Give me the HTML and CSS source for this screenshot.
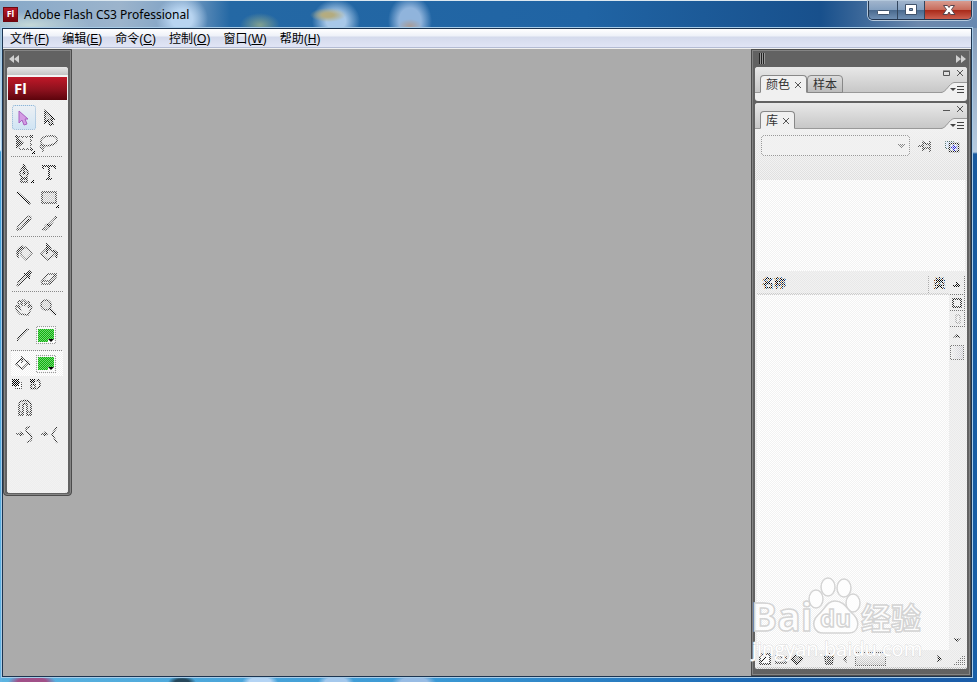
FILE: index.html
```html
<!DOCTYPE html>
<html lang="zh-CN">
<head>
<meta charset="utf-8">
<title>Adobe Flash CS3 Professional</title>
<link rel="stylesheet" href="styles.css">
</head>
<body>
<div class="window">
  <header class="titlebar">
    <span class="app-icon">Fl</span>
    <h1 class="title">Adobe Flash CS3 Professional</h1>
    <div class="window-buttons">
      <button class="wb wb-min" aria-label="最小化"><svg width="28" height="18" viewBox="0 0 28 18"><rect x="8.500" y="9.500" width="12" height="4" rx="1" fill="#fff" stroke="#40536b"/></svg></button>
      <button class="wb wb-max" aria-label="最大化"><svg width="26" height="18" viewBox="0 0 26 18"><path d="M7.500 3.500h11v10h-11zM11.500 7.500h3v2h-3z" fill="#fff" fill-rule="evenodd" stroke="#40536b"/></svg></button>
      <button class="wb wb-close" aria-label="关闭"><svg width="46" height="18" viewBox="0 0 46 18"><path d="M18.500 4.500h4l1.500 2 1.500-2h4L26.500 8.500l3.500 5h-4.500L24 11l-1.500 2.500H18l3.500-5z" fill="#fff" stroke="#56444d"/></svg></button>
    </div>
  </header>

  <div class="client">
    <nav class="menubar">
      <button>文件(<u>F</u>)</button>
      <button>编辑(<u>E</u>)</button>
      <button>命令(<u>C</u>)</button>
      <button>控制(<u>O</u>)</button>
      <button>窗口(<u>W</u>)</button>
      <button>帮助(<u>H</u>)</button>
    </nav>

    <main class="workspace">
      <aside class="toolbox">
        <button class="collapse" aria-label="折叠"><svg width="10" height="8" viewBox="0 0 10 8"><path d="M5 0v8L0 4zM10 0v8L5 4z" fill="#d0d0d0"/></svg></button>
        <div class="tool-panel">
          <div class="grip"></div>
          <div class="brand">Fl</div>
          <div class="tools dither">
            <div class="group">
              <button class="tool selected" aria-label="选择"><svg viewBox="0 0 24 24"><path d="M7 5v12l3-3 2 5 3-1-2-5h3z" fill="#d49ce4" stroke="#a860c0"/></svg></button>
              <button class="tool" aria-label="部分选取"><svg viewBox="0 0 24 24"><path d="M8 5v12l3-3 2 5 3-1-2-5h3z" fill="#bbb" stroke="#000" stroke-width="1.500"/></svg></button>
              <button class="tool" aria-label="任意变形"><svg viewBox="0 0 24 24"><path d="M5 6h14v12H7" fill="none" stroke="#333" stroke-dasharray="3 1" stroke-width="1.500"/><path d="M4 5v13l8-6z" fill="#333"/><path d="M3 4h3v3H3zM18 4h3v3h-3zM18 17h3v3h-3z" fill="#333"/><path d="M23 19v4h-4z"/></svg></button>
              <button class="tool" aria-label="套索"><svg viewBox="0 0 24 24"><path d="M6 14c-5-3-1-9 6-9 8-1 11 5 5 8-4 2-9 2-12 1-3 1-1 4 1 3s1-3-1-3m1 3v4" fill="none" stroke="#444" stroke-width="1.500"/></svg></button>
            </div>
            <hr>
            <div class="group">
              <button class="tool" aria-label="钢笔"><svg viewBox="0 0 24 24"><path d="M12 3c0 4-5 7-4 10l2 4h4l2-4c1-3-4-6-4-10zm0 2v7m-3 6h6v3H9z" fill="#ddd" stroke="#222" stroke-width="1.500"/><circle cx="12" cy="12" r="1.500"/><path d="M22 18v4h-4z"/></svg></button>
              <button class="tool" aria-label="文本"><svg viewBox="0 0 24 24"><path d="M6 8V5h12v3M12 5v13m-3 0h6" fill="none" stroke="#222" stroke-width="2"/></svg></button>
              <button class="tool" aria-label="线条"><svg viewBox="0 0 24 24"><path d="M5 6l13 12" stroke="#000" stroke-width="2"/></svg></button>
              <button class="tool" aria-label="矩形"><svg viewBox="0 0 24 24"><path d="M5 6h14v11H5z" fill="#ccc" stroke="#333" stroke-width="1.500"/><path d="M22 18v4h-4z"/></svg></button>
              <button class="tool" aria-label="铅笔"><svg viewBox="0 0 24 24"><path d="M5 19l1-4L15 6c3-2 5 0 3 3l-9 9z" fill="#ddd" stroke="#555" stroke-width="1.500"/><path d="M5 19L17 8" stroke="#000"/></svg></button>
              <button class="tool" aria-label="刷子"><svg viewBox="0 0 24 24"><path d="M5 18c3 0 2-4 5-5L18 5l2 1-7 9c-1 4-5 5-8 3z" fill="#999" stroke="#333"/><path d="M10 13l3 2" stroke="#000" stroke-width="2"/></svg></button>
            </div>
            <hr>
            <div class="group">
              <button class="tool" aria-label="墨水瓶"><svg viewBox="0 0 24 24"><path d="M9 9l5-3 6 6-6 7-5-5z" fill="#ddd" stroke="#666" stroke-width="1.500"/><path d="M11 5c-5 1-8 5-5 12 0-6 2-9 6-10" fill="#333" stroke="#333"/></svg></button>
              <button class="tool" aria-label="颜料桶"><svg viewBox="0 0 24 24"><path d="M10 7l9 5-8 7-7-6z" fill="#ddd" stroke="#444" stroke-width="1.500"/><path d="M10 13V4l4 4M16 9l4 3-1 5" fill="none" stroke="#222" stroke-width="2"/></svg></button>
              <button class="tool" aria-label="滴管"><svg viewBox="0 0 24 24"><path d="M5 20l1-4 7-7 2 2-8 8z" fill="#bbb" stroke="#333"/><path d="M11 7l3 0 3-3 3 2-2 4v4z" fill="#222"/></svg></button>
              <button class="tool" aria-label="橡皮擦"><svg viewBox="0 0 24 24"><path d="M5 15l6-7h8l-6 7zM5 15v3h8v-3m0 3l6-7V8" fill="#eee" stroke="#444" stroke-width="1.500"/></svg></button>
            </div>
            <hr>
            <div class="group">
              <button class="tool" aria-label="手形"><svg viewBox="0 0 24 24"><path d="M8 18c-2-2-5-6-4-8 2-1 3 2 4 3L6 6c1-2 3-1 3 1l1 3V5c1-2 3-1 3 0v5l2-4c1-1 3 0 2 2l-1 4 2-3c2 0 2 2 1 4l-3 6z" fill="#eee" stroke="#444" stroke-width="1.500"/></svg></button>
              <button class="tool" aria-label="缩放"><svg viewBox="0 0 24 24"><circle cx="9" cy="9" r="5" fill="#ccc" stroke="#444" stroke-width="1.500"/><path d="M13 13l6 6" stroke="#111" stroke-width="2"/></svg></button>
            </div>
            <div class="color-row">
              <svg class="mini" viewBox="0 0 24 24"><path d="M6 18l1-3 9-9 2 1-9 9z" fill="#aaa" stroke="#222"/></svg>
              <button class="swatch" aria-label="笔触颜色"><span class="chip"></span></button>
            </div>
            <div class="color-row active">
              <svg class="mini" viewBox="0 0 24 24"><path d="M5 12l6-6 6 5-6 6zM11 11V4M16 9l3 4" fill="none" stroke="#222" stroke-width="1.500"/></svg>
              <button class="swatch" aria-label="填充颜色"><span class="chip"></span></button>
            </div>
            <div class="small-row">
              <button aria-label="黑白"><svg width="14" height="12" viewBox="0 0 14 12"><path d="M4.500 4.500h6v6h-6z" fill="#fff" stroke="#444"/><path d="M1 1h7v7H1z"/></svg></button>
              <button aria-label="交换颜色"><svg width="14" height="12" viewBox="0 0 14 12"><path d="M1 1h5v4H1z"/><path d="M2 6.500h4v4H2zM8 2c4 0 4 8 0 8m2-9L7 3m3 6l-3 2" fill="none" stroke="#222" stroke-width="1.500"/></svg></button>
            </div>
            <div class="group options">
              <button class="tool" aria-label="贴紧至对象"><svg viewBox="0 0 24 24"><path d="M7 19V9c0-6 12-6 12 0v10h-4V9c0-2-4-2-4 0v10z" fill="#ddd" stroke="#222" stroke-width="1.500"/><path d="M7 16h4m4 0h4" stroke="#222"/></svg></button>
            </div>
            <div class="group options">
              <button class="tool" aria-label="平滑"><svg viewBox="0 0 24 24"><path d="M4 11h7M8 9l3 2-3 2M18 4c-5 0-5 4-2 6 5 3 5 8-1 9" fill="none" stroke="#333" stroke-width="1.500"/></svg></button>
              <button class="tool" aria-label="伸直"><svg viewBox="0 0 24 24"><path d="M4 11h6M7 9l3 2-3 2M20 4l-5 7 5 9" fill="none" stroke="#333" stroke-width="1.500"/></svg></button>
            </div>
          </div>
        </div>
      </aside>

      <aside class="dock">
        <div class="dock-head">
          <span class="dock-grip"></span>
          <button aria-label="展开"><svg width="10" height="8" viewBox="0 0 10 8"><path d="M0 0v8l5-4zM5 0v8l5-4z" fill="#d0d0d0"/></svg></button>
        </div>

        <section class="panel">
          <div class="panel-head">
            <div class="tabs">
              <button class="tab on">颜色<svg width="8" height="8" viewBox="0 0 8 8"><path d="M1 1l6 6M7 1L1 7" stroke="#555"/></svg></button>
              <button class="tab">样本</button>
            </div>
            <div class="panel-tools">
              <div class="controls">
                <button aria-label="还原"><svg width="8" height="8" viewBox="0 0 8 8"><path d="M.5 1.500h6v4h-6zM0 1h7" fill="none" stroke="#555"/></svg></button>
                <button aria-label="关闭面板"><svg width="8" height="8" viewBox="0 0 8 8"><path d="M1 0l6 6M7 0L1 6" stroke="#555"/></svg></button>
              </div>
              <button class="flap" aria-label="面板菜单"><svg width="26" height="11" viewBox="0 0 26 11"><path d="M1 10.500C7 9 8 1 13 .5h13V11H1z" fill="#f0f0f0"/><path d="M0 10.500c5 0 8-9 13-10h13" fill="none" stroke="#999"/><path d="M9 6h6l-3 3z" fill="#444"/><path d="M16 4.500h7m-7 3h7m-7 3h7" stroke="#444"/></svg></button>
            </div>
          </div>
          <div class="panel-stub"></div>
        </section>

        <section class="panel library">
          <div class="panel-head">
            <div class="tabs">
              <button class="tab on">库<svg width="8" height="8" viewBox="0 0 8 8"><path d="M1 1l6 6M7 1L1 7" stroke="#555"/></svg></button>
            </div>
            <div class="panel-tools">
              <div class="controls">
                <button aria-label="最小化面板"><svg width="8" height="8" viewBox="0 0 8 8"><path d="M0 4.500h7" stroke="#555"/></svg></button>
                <button aria-label="关闭面板"><svg width="8" height="8" viewBox="0 0 8 8"><path d="M1 0l6 6M7 0L1 6" stroke="#555"/></svg></button>
              </div>
              <button class="flap" aria-label="面板菜单"><svg width="26" height="11" viewBox="0 0 26 11"><path d="M1 10.500C7 9 8 1 13 .5h13V11H1z" fill="#f0f0f0"/><path d="M0 10.500c5 0 8-9 13-10h13" fill="none" stroke="#999"/><path d="M9 6h6l-3 3z" fill="#444"/><path d="M16 4.500h7m-7 3h7m-7 3h7" stroke="#444"/></svg></button>
            </div>
          </div>
          <div class="library-body dither">
            <div class="doc-row">
              <select aria-label="文档" disabled><option></option></select>
              <button aria-label="固定当前库"><svg width="16" height="14" viewBox="0 0 16 14"><path d="M1 7h5M6 3v8l3-2h4V5H9zM13 2v11" fill="#ccc" stroke="#333" stroke-width="1.500"/></svg></button>
              <button aria-label="新建库面板"><svg width="16" height="14" viewBox="0 0 16 14"><path d="M1.500 2.500h8v7h-8z" fill="#cfe3ff" stroke="#577"/><path d="M5.500 4.500h9v8h-9z" fill="#dce8ff" stroke="#222" stroke-width="1.500"/><path d="M7 8.500h6M10 6v6" stroke="#22d" stroke-width="2"/></svg></button>
            </div>
            <div class="preview"></div>
            <div class="listing">
              <div class="items">
                <table>
                  <thead><tr><th>名称</th><th class="type">类</th></tr></thead>
                </table>
              </div>
              <div class="side">
                <button class="side-btn sort" aria-label="切换排序顺序"><svg width="8" height="6" viewBox="0 0 8 6"><path d="M3 0h2v2h2v3H0V3h3z" fill="#111"/></svg></button>
                <button class="side-btn" aria-label="宽库视图"><svg width="10" height="10" viewBox="0 0 10 10"><path d="M1 1h8v8H1z" fill="#eee" stroke="#000" stroke-width="1.500"/></svg></button>
                <button class="side-btn" aria-label="窄库视图"><svg width="10" height="10" viewBox="0 0 10 10"><path d="M4 1h4v8H4z" fill="#eee" stroke="#888"/></svg></button>
                <div class="vscroll">
                  <svg width="8" height="5" viewBox="0 0 8 5"><path d="M0 4l4-4 4 4-4-1z" fill="#222"/></svg>
                  <span class="vthumb"></span>
                  <svg class="down" width="8" height="5" viewBox="0 0 8 5"><path d="M0 0l4 4 4-4-4 1z" fill="#222"/></svg>
                </div>
              </div>
            </div>
            <div class="lib-foot">
              <button aria-label="新建元件"><svg width="12" height="12" viewBox="0 0 12 12"><path d="M3 1h8v10H1V3z" fill="#fff" stroke="#111" stroke-width="1.500"/><path d="M2 9l5-5" stroke="#111" stroke-width="1.500"/></svg></button>
              <button aria-label="新建文件夹"><svg width="12" height="12" viewBox="0 0 12 12"><path d="M1 3h4l1 1h5v6H1z" fill="#ccc" stroke="#333" stroke-width="1.500"/></svg></button>
              <button aria-label="属性"><svg width="12" height="12" viewBox="0 0 12 12"><path d="M6 1l5 5-5 5-5-5z" fill="#999" stroke="#111" stroke-width="2"/></svg></button>
              <button class="trash" aria-label="删除"><svg width="12" height="12" viewBox="0 0 12 12"><path d="M2 4h8l-1 7H3zM1 3h10M4 1h4M5 5v5m2-5v5" fill="#ccc" stroke="#222" stroke-width="1.500"/></svg></button>
              <div class="hscroll">
                <svg width="5" height="8" viewBox="0 0 5 8"><path d="M4 0L0 4l4 4-1-4z" fill="#333"/></svg>
                <span class="hthumb"></span>
                <svg class="next" width="5" height="8" viewBox="0 0 5 8"><path d="M0 0l5 4-5 4 1-4z" fill="#111"/></svg>
              </div>
              <svg width="13" height="12" viewBox="0 0 13 12"><path d="M2 11.500h11M4 9.500h9M6 7.500h7M8 5.500h5M10 3.500h3" stroke="#777"/></svg>
            </div>
          </div>
        </section>
      </aside>
    </main>
  </div>

  <svg class="watermark" width="180" height="88" viewBox="0 0 180 88">
    <g fill="#fff" fill-opacity=".75" stroke="#d4d4d4" stroke-width="1.500">
      <text class="wm-latin" x="1" y="54">Bai</text>
      <ellipse cx="66" cy="22" rx="7" ry="9"/><ellipse cx="78" cy="10" rx="7" ry="9"/><ellipse cx="94" cy="11" rx="7" ry="9"/><ellipse cx="103" cy="26" rx="7" ry="9"/>
      <path d="M85 24c-8 0-10 8-17 14-8 8-4 19 7 18h22c11 1 14-10 7-18-7-6-10-14-19-14z"/>
      <text class="wm-du" x="70" y="50">du</text>
      <text class="wm-cn" x="111" y="52">经验</text>
    </g>
    <text class="wm-url" x="2" y="79">jingyan.baidu.com</text>
  </svg>
</div>
</body>
</html>
```
FILE: styles.css
```css
* { box-sizing: border-box; }

body {
  margin: 0;
  font: 12px/16px "Liberation Sans", "Noto Sans CJK SC", sans-serif;
  color: #000;
}

button {
  display: flex;
  align-items: center;
  justify-content: center;
  margin: 0;
  padding: 0;
  border: 0;
  background: none;
  font: inherit;
  color: inherit;
}

svg { display: block; flex: none; }

.window {
  position: relative;
  display: flex;
  flex-direction: column;
  min-height: 100vh;
  padding: 0 5px 5px 2px;
  background:
    radial-gradient(ellipse 24px 8px at 32px 100%, #a05088 60%, transparent),
    radial-gradient(ellipse 14px 6px at 182px 100%, #26485c 50%, transparent),
    radial-gradient(ellipse 18px 8px at 260px 100%, #b4d4f4 60%, transparent),
    radial-gradient(ellipse 18px 8px at 336px 100%, #a4c8ec 60%, transparent),
    radial-gradient(ellipse 22px 8px at 414px 100%, #98bce4 60%, transparent),
    linear-gradient(#7890b0, #b8cce0 152px, #1a5a9e 154px, #1a60a8) right top / 5px 100% no-repeat,
    linear-gradient(#8fb0cc, #d8ecf8 150px, #3b9cd6 152px, #64b4e4) left top / 2px 100% no-repeat,
    linear-gradient(90deg, #5cb4e0, #3a98d4 45%, #1a64b0 80%, #1a5ca8);
}

.titlebar {
  display: flex;
  align-items: center;
  height: 28px;
  margin: 0 -5px 0 -2px;
  padding: 0 5px 0 3px;
  border-top: 1px solid #dce8f0;
  background:
    radial-gradient(ellipse 26px 24px at 182px 18px, #b8d4f0 40%, transparent),
    radial-gradient(ellipse 20px 12px at 260px 24px, #80a090, transparent),
    radial-gradient(ellipse 18px 7px at 328px 14px, #b4ac80 30%, transparent),
    radial-gradient(ellipse 24px 22px at 336px 20px, #a8c8e8 40%, transparent),
    radial-gradient(ellipse 12px 7px at 410px 25px, #a89c98, transparent),
    radial-gradient(ellipse 22px 26px at 410px 20px, #90b4dc 50%, transparent),
    radial-gradient(ellipse 60px 14px at 30px 24px, #c4d8d8, transparent),
    linear-gradient(90deg, #86a8c8, #9cb4cc 120px, #7ca0c4 185px, #2468a4 230px, #2064a4 60%, #18508c 84%, #6c88ac 94%, #6888b0);
}

.app-icon {
  width: 15px;
  height: 15px;
  border: 1px solid #6e0810;
  background: linear-gradient(#b81828, #78040c);
  color: #fff;
  font: bold 9px/12px "Open Sans", sans-serif;
  text-align: center;
}

.title {
  flex: 1;
  margin: 0 0 0 6px;
  font: 12px/18px "Noto Sans", sans-serif;
}

.window-buttons {
  display: flex;
  align-self: flex-start;
  height: 19px;
  border: 1px solid #24364e;
  border-top: 0;
  border-radius: 0 0 5px 5px;
  box-shadow: 0 0 0 1px #b4c8dc;
  overflow: hidden;
}
.wb { background: linear-gradient(#a0b4cc, #84a0c0 48%, #48688c 50%, #7090b4); }
.wb + .wb { border-left: 1px solid #32465e; }
.wb-close { background: linear-gradient(#d89c90, #c86c5c 48%, #a82818 50%, #cc6050); }

.client {
  flex: 1;
  display: flex;
  flex-direction: column;
  border: 1px solid #1c3450;
  box-shadow: 0 0 0 1px #a8cce8;
  background: #ababab;
}

.menubar {
  display: flex;
  gap: 13px;
  height: 20px;
  padding: 0 7px;
  border-bottom: 1px solid #f0f0f0;
  box-shadow: inset 0 -1px #b4bcd4;
  background: linear-gradient(#fff, #eef1f8 7px, #d4daec 8px, #e2e6f6);
}

.workspace {
  flex: 1;
  display: flex;
  justify-content: space-between;
}

.toolbox, .dock {
  border: 1px solid #4c4c4c;
  box-shadow: inset 0 0 0 1px #848484;
  background: #626262;
}
.toolbox {
  align-self: flex-start;
  width: 69px;
  padding: 0 3px 2px;
  border-radius: 0 0 4px 4px;
}
.collapse { height: 17px; padding-left: 2px; }

.tool-panel { border-radius: 3px; background: #eee; overflow: hidden; }
.grip {
  height: 10px;
  border-bottom: 2px solid #f4f4f4;
  background: linear-gradient(#e8e8e8, #c4c4c4);
}
.brand {
  height: 23px;
  padding-left: 6px;
  margin: 0 1px;
  background: linear-gradient(#c01828, #88101c 60%, #5c040c);
  color: #fff;
  font: bold 15px/23px "Open Sans", sans-serif;
}

/* Disabled look: every second pixel is painted over with the panel colour. */
.dither { position: relative; }
.dither::after {
  content: "";
  position: absolute;
  inset: 0;
  background: conic-gradient(#f2f2f2 25%, transparent 0 50%, #f2f2f2 0 75%, transparent 0) 0 0 / 2px 2px;
  pointer-events: none;
}

.tools { padding: 5px 5px 44px 4px; }
.tools hr {
  height: 1px;
  margin: 1px 0 3px;
  border: 0;
  background: #888;
}
.group { display: grid; grid-template-columns: 25px 25px; }
.tool { height: 25px; }
.tool svg, .mini { width: 24px; height: 24px; }

/* Coloured parts sit above the overlay and carry softened tints of their own. */
.selected, .chip { position: relative; z-index: 1; }
.selected {
  width: 24px;
  justify-self: end;
  border: 1px dotted #90b4d4;
  border-radius: 3px;
  background: linear-gradient(#ecf0f4, #d0e4f4);
}

.color-row {
  display: flex;
  align-items: center;
  gap: 1px;
  height: 26px;
  margin-top: 2px;
}
.color-row.active { background: #fff; border-top: 1px solid #888; }
.swatch {
  width: 20px;
  height: 18px;
  border: 1px solid #999;
  background: #fff;
}
.chip {
  width: 16px;
  height: 13px;
  background: conic-gradient(#70d870 25%, #10b010 0 50%, #70d870 0 75%, #10b010 0) 0 0 / 2px 2px;
}
.chip::after {
  content: "";
  position: absolute;
  right: 0;
  bottom: 0;
  border: 3px solid #fff;
  border-top-color: #000;
  border-bottom: 0;
}
.small-row { display: flex; gap: 4px; margin: 2px 0 5px; }
.options { margin-bottom: 2px; }

.dock { display: flex; flex-direction: column; width: 220px; padding: 0 3px 6px; }
.dock-head {
  display: flex;
  align-items: center;
  justify-content: space-between;
  height: 17px;
  padding: 0 1px 0 4px;
}
.dock-grip {
  width: 6px;
  height: 11px;
  background: repeating-linear-gradient(90deg, #222 0 1px, #999 1px 2px);
}

.panel { border-radius: 3px; background: #f0f0f0; overflow: hidden; }
.panel-head {
  display: flex;
  align-items: flex-end;
  justify-content: space-between;
  height: 26px;
  background: linear-gradient(#e8e8e8, #c6c6c6);
  box-shadow: inset 0 -1px #999;
}
.panel-stub { height: 8px; }

.tabs { display: flex; padding-left: 5px; }
.tab {
  gap: 4px;
  height: 18px;
  padding: 2px 5px 0;
  border: 1px solid #888;
  border-radius: 4px 4px 0 0;
  background: linear-gradient(#dcdcdc, #bcbcbc);
  color: #333;
}
.tab.on { padding-right: 4px; border-bottom-color: #f0f0f0; background: #f0f0f0; }

.panel-tools { display: flex; flex-direction: column; align-items: flex-end; gap: 4px; }
.controls { display: flex; gap: 5px; padding-right: 3px; }

.library { flex: 1; display: flex; flex-direction: column; margin-top: 2px; }
.library-body {
  flex: 1;
  display: flex;
  flex-direction: column;
  padding: 6px 2px 2px;
  background: linear-gradient(#f0f0f0, #dedede 51px, #e9e9e9 52px);
  box-shadow: inset 0 -2px #c0c0c0;
}
.doc-row { display: flex; gap: 2px; height: 45px; padding: 0 1px 0 4px; align-items: flex-start; }
.doc-row select {
  flex: 1;
  min-width: 0;
  height: 21px;
  appearance: none;
  border: 1px solid #999;
  border-radius: 3px;
  background: conic-gradient(from -45deg at 50% 100%, #888 90deg, transparent 0) right 4px center / 8px 4px no-repeat #f0f0f0;
  opacity: 1;
}
.doc-row button { height: 21px; width: 25px; }

.preview { height: 91px; background: #fff; }
.listing { flex: 1; display: flex; margin-top: 4px; }
.items { flex: 1; background: #fff; }
.items table { width: 100%; border-collapse: collapse; table-layout: fixed; background: #e8e8e8; }
.items th {
  height: 19px;
  padding: 0 0 0 5px;
  border-bottom: 2px solid #ccc;
  font-weight: bold;
  text-align: left;
}
.items .type { width: 21px; border-left: 1px solid #aaa; }

.side { display: flex; flex-direction: column; width: 16px; }
.side-btn { height: 16px; border: 1px solid #777; border-width: 0 1px 1px 0; }
.side-btn.sort { height: 20px; }
.vscroll {
  flex: 1;
  display: flex;
  flex-direction: column;
  align-items: center;
  padding: 7px 0;
  background: #eaeaea;
}
.vthumb { width: 14px; height: 15px; margin-top: 6px; border: 1px solid #777; background: linear-gradient(90deg, #f0f0f0, #c8c8d0); }
.down { margin-top: auto; }

.lib-foot { display: flex; align-items: center; gap: 4px; height: 17px; padding-left: 2px; }
.trash { margin: 0 4px 0 16px; }
.hscroll { flex: 1; display: flex; align-items: center; gap: 7px; margin-right: 6px; }
.hthumb { width: 31px; height: 14px; border: 1px solid #666; background: linear-gradient(#eee, #bbb); }
.next { margin-left: auto; }

.watermark { position: absolute; right: 47px; bottom: 17px; pointer-events: none; }
.wm-latin { font: bold 39px "Open Sans", sans-serif; }
.wm-du { font: bold 24px "Open Sans", sans-serif; }
.wm-cn { font: bold 30px "Noto Sans CJK SC", sans-serif; }
.wm-url { font: 20px "Open Sans", sans-serif; fill: #fff; stroke: #ddd; stroke-width: 1; paint-order: stroke; }
```
